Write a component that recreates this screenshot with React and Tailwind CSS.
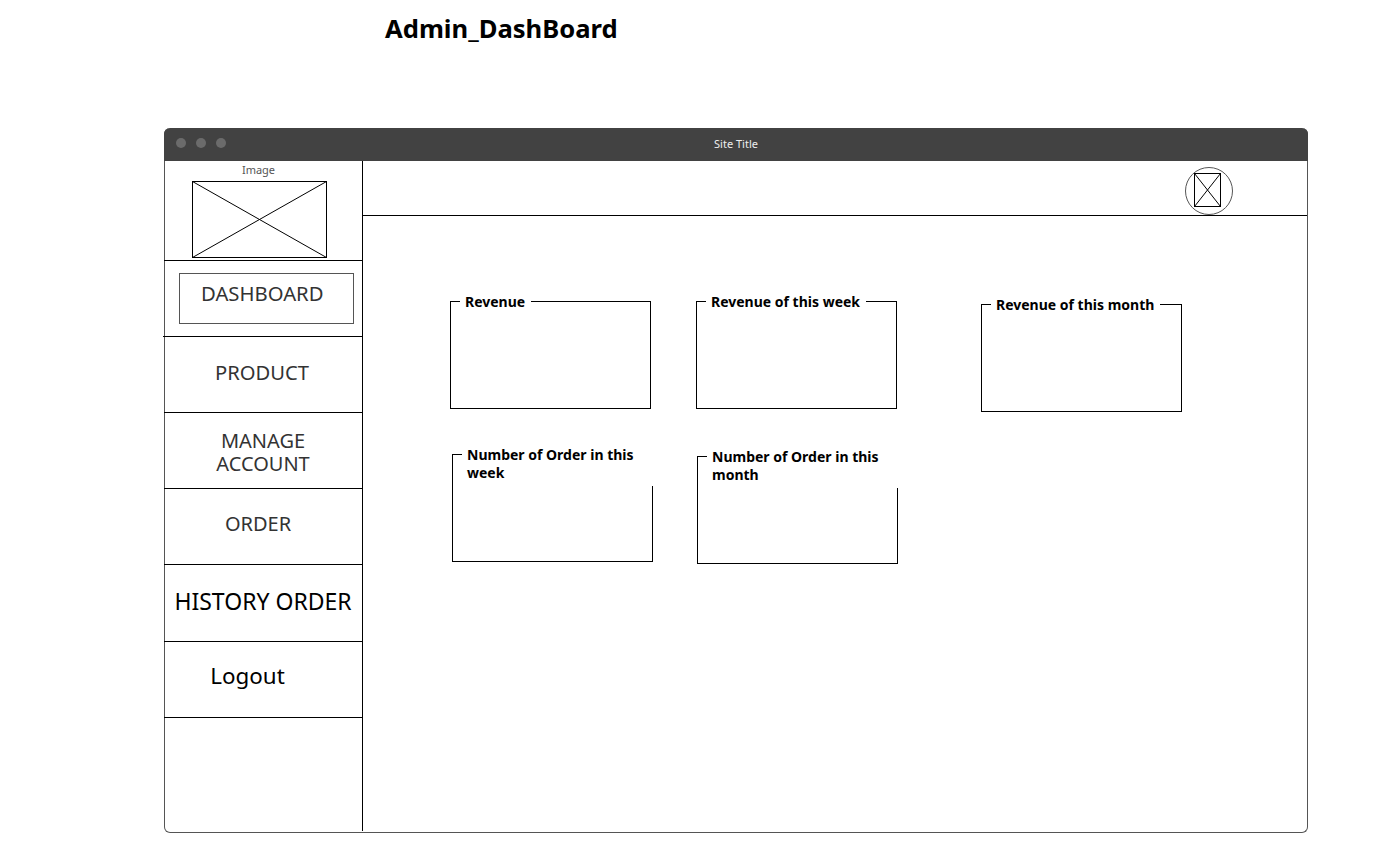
import React from 'react';

const font = "font-['Noto_Sans','Open_Sans',sans-serif]";

const Card = ({ title, className = '', wrap = false }) => (
  <div className={`relative w-[201px] h-[108px] border border-black ${className}`}>
    <div
      className={`absolute -top-[9px] left-[9px] bg-white text-[14px] leading-[18px] font-bold text-black ${
        wrap
          ? '-right-[1px] h-[40px] pl-[5px] pr-[10px]'
          : 'pl-[5px] pr-[6px] whitespace-nowrap'
      }`}
    >
      {title}
    </div>
  </div>
);

const NavItem = ({ children, className = '' }) => (
  <div className={`h-[76px] shrink-0 -ml-[1px] border-b border-black flex items-center justify-center text-center ${className}`}>
    {children}
  </div>
);

export default function App() {
  return (
    <div className={`h-[842px] bg-white overflow-hidden ${font}`}>
      <h1 className="pl-[385px] pt-[11px] h-[128px] text-[25.6px] leading-[36px] font-bold text-black">
        Admin_DashBoard
      </h1>

      <div className="ml-[164px] w-[1144px] h-[705px] rounded-[6px] border border-[#555] border-t-0 flex flex-col">
        {/* title bar */}
        <div className="relative -mx-[1px] h-[33px] shrink-0 rounded-t-[6px] bg-[#424242] flex items-center justify-center text-[11px] text-[#eee]">
          <div className="absolute left-[12px] top-[10px] flex gap-[10px]">
            <span className="w-[10px] h-[10px] rounded-full bg-[#6b6b6b]" />
            <span className="w-[10px] h-[10px] rounded-full bg-[#6b6b6b]" />
            <span className="w-[10px] h-[10px] rounded-full bg-[#6b6b6b]" />
          </div>
          Site Title
        </div>

        <div className="flex flex-1 min-h-0">
          {/* sidebar */}
          <div className="w-[198px] shrink-0 mb-[1px] border-r border-black flex flex-col">
            <div className="h-[100px] shrink-0 -ml-[1px] border-b border-black pl-[28px]">
              <div className="w-[135px] text-center text-[11px] leading-[15px] text-[#555] pt-[1px] h-[20px] pr-[2px]">Image</div>
              <svg width="135" height="77" viewBox="0 0 135 77" className="block">
                <rect x="0.5" y="0.5" width="134" height="76" fill="none" stroke="#000" />
                <path d="M0.5 0.5L134.5 76.5M134.5 0.5L0.5 76.5" stroke="#000" strokeWidth="1" fill="none" />
              </svg>
            </div>
            <div className="h-[76px] shrink-0 -ml-[2px] border-b border-black pl-[16px] pt-[12px]">
              <div className="w-[175px] h-[51px] border border-[#555] pl-[21px] text-[20.3px] leading-[39px] text-[#333]">
                DASHBOARD
              </div>
            </div>
            <NavItem className="text-[20.2px] text-[#333] pb-[5px] pr-[2px]">PRODUCT</NavItem>
            <NavItem className="text-[20px] leading-[23px] text-[#333] pt-[3px]">
              <span>MANAGE<br />ACCOUNT</span>
            </NavItem>
            <NavItem className="text-[20px] text-[#333] pb-[5px] pr-[10px]">ORDER</NavItem>
            <NavItem className="h-[77px] text-[23px] text-black pb-[4px]">HISTORY ORDER</NavItem>
            <NavItem className="text-[22.4px] text-black pb-[8px] pr-[31px]">Logout</NavItem>
          </div>

          {/* main */}
          <div className="flex-1 min-w-0">
            <div className="h-[55px] border-b border-black flex items-start justify-end pr-[74px] pt-[6px]">
              <svg width="48" height="48" viewBox="0 0 48 48" className="block">
                <circle cx="24" cy="24" r="23.5" fill="none" stroke="#555" />
                <rect x="9.5" y="6.5" width="26" height="33" fill="none" stroke="#000" />
                <path d="M9.5 6.5L35.5 39.5M35.5 6.5L9.5 39.5" stroke="#000" strokeWidth="1" fill="none" />
              </svg>
            </div>

            <div className="pl-[87px] pt-[85px]">
              <div className="flex items-start">
                <Card title="Revenue" />
                <Card title="Revenue of this week" className="ml-[45px]" />
                <Card title="Revenue of this month" className="ml-[84px] mt-[3px]" />
              </div>
              <div className="flex items-start mt-[42px]">
                <Card title="Number of Order in this week" wrap className="ml-[2px]" />
                <Card title="Number of Order in this month" wrap className="ml-[44px] mt-[2px]" />
              </div>
            </div>
          </div>
        </div>
      </div>
    </div>
  );
}
